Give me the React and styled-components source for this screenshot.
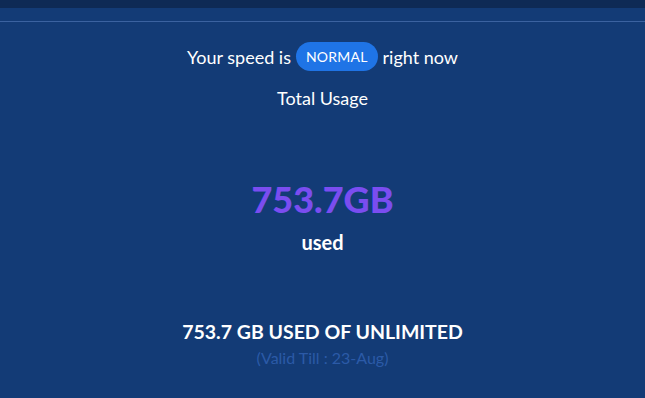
import React from "react";
import styled, { createGlobalStyle } from "styled-components";

// ----------------------------------------

const GlobalStyle = createGlobalStyle`
  html, body {
    margin: 0;
    padding: 0;
    background: #133b76;
    font-family: Lato, "Noto Sans", sans-serif;
  }
`;

const Page = styled.div`
  min-height: 398px;
  background: #133b76;
  color: #ffffff;
`;

const TopBar = styled.div`
  height: 8px;
  background: #0e2a55;
`;

const Divider = styled.div`
  margin-top: 13px;
  height: 1px;
  background: #3b62a0;
`;

const Content = styled.div`
  display: flex;
  flex-direction: column;
  align-items: center;
  text-align: center;
`;

const SpeedLine = styled.div`
  margin-top: 20px;
  display: flex;
  align-items: center;
  gap: 5px;
  font-size: 18px;
  height: 29px;
`;

const Pill = styled.span`
  display: inline-flex;
  align-items: center;
  height: 29px;
  padding: 0 10px;
  border-radius: 15px;
  background: #1f74e6;
  font-size: 14px;
  letter-spacing: 0.2px;
`;

const Label = styled.div`
  margin-top: ${(props) => props.mt}px;
  font-size: ${(props) => props.size}px;
  font-weight: ${(props) => props.weight || 400};
  color: ${(props) => props.color || "#ffffff"};
  line-height: 1.2;
`;

// -------------------------------------

const App = () => {
  return (
    <Page>
      <GlobalStyle />
      <TopBar />
      <Divider />
      <Content>
        <SpeedLine>
          Your speed is <Pill>NORMAL</Pill> right now
        </SpeedLine>
        <Label mt={17} size={18}>
          Total Usage
        </Label>
        <Label mt={68} size={36} weight={900} color="#7a4df0">
          753.7GB
        </Label>
        <Label mt={9} size={20} weight={700}>
          used
        </Label>
        <Label mt={66} size={19.5} weight={700}>
          753.7 GB USED OF UNLIMITED
        </Label>
        <Label mt={5} size={16} color="#2b5aa7">
          (Valid Till : 23-Aug)
        </Label>
      </Content>
    </Page>
  );
};

export default App;
